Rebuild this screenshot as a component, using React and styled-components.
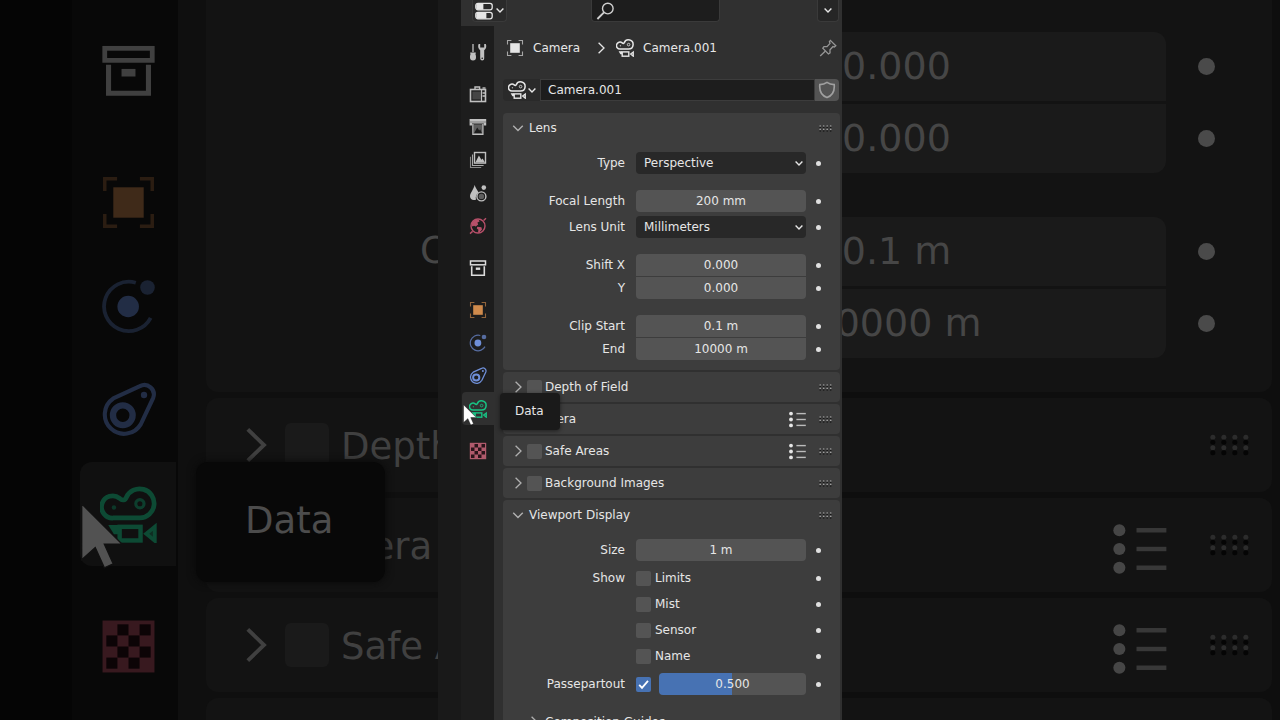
// App.jsx
import { useState } from "react";
import styled, { createGlobalStyle } from "styled-components";

const GlobalStyle = createGlobalStyle`
  * {
    box-sizing: border-box;
  }
  body {
    margin: 0;
    background: #050505;
    overflow: hidden;
  }
  body, button, input, select, output {
    font-family: "DejaVu Sans", "Noto Sans", sans-serif;
    font-size: 12px;
    line-height: 16px;
    color: #e6e6e6;
  }
  button, input, select {
    appearance: none;
    margin: 0;
    padding: 0;
    border: none;
    outline: none;
    background: none;
  }
  svg {
    display: block;
    flex: none;
  }
`;

const Page = styled.div`
  display: grid;
  grid-template-columns: minmax(0, 1fr) minmax(320px, 404px) minmax(0, 1fr);
  height: 100vh;
  overflow: hidden;
`;

/* ---------- icons ---------- */
const Svg = ({ size = 18, children, ...rest }) => (
  <svg
    width={size}
    height={size}
    viewBox="0 0 18 18"
    fill="none"
    stroke="currentColor"
    aria-hidden="true"
    {...rest}
  >
    {children}
  </svg>
);

const CameraIcon = ({ size }) => (
  <Svg size={size}>
    <path
      d="M4.2 10.1A3.5 3.5 0 1 1 6.2 3.9C7 4.7 8 4.5 8.3 3.6A4.6 4.6 0 1 1 12.6 10.1Z"
      strokeWidth="1.5"
    />
    <circle cx="12.6" cy="5.6" r="1.3" strokeWidth="1" opacity="0.8" />
    <circle cx="4.4" cy="6.8" r="0.7" fill="currentColor" stroke="none" opacity="0.7" />
    <rect x="6.2" y="12.9" width="6.6" height="4.3" strokeWidth="1.4" />
    <path d="M2.6 12.3H6V15.2H4.4Z" fill="currentColor" stroke="none" />
    <path d="M17.3 12.9V17.3L14.6 15.1Z" fill="currentColor" fillOpacity="0.5" strokeWidth="1.2" />
  </Svg>
);

const ArchiveIcon = ({ size }) => (
  <Svg size={size}>
    <rect x="1.5" y="2" width="15" height="3.8" strokeWidth="1.5" />
    <path d="M2.7 7.2V16.2H15.3V7.2" strokeWidth="1.6" />
    <rect x="6.8" y="8.5" width="4.4" height="2.4" fill="currentColor" stroke="none" />
  </Svg>
);

const ObjectIcon = ({ size }) => (
  <Svg size={size}>
    <path
      d="M1.5 5.4V1.5H5.4M12.6 1.5H16.5V5.4M16.5 12.6V16.5H12.6M5.4 16.5H1.5V12.6"
      strokeWidth="1.1"
      opacity="0.65"
    />
    <rect x="4.2" y="4.2" width="9.6" height="9.6" fill="currentColor" stroke="none" />
  </Svg>
);

const PhysicsIcon = ({ size }) => (
  <Svg size={size}>
    <path d="M11.3 1.5A7.8 7.8 0 1 0 16 12.6" strokeWidth="1.2" opacity="0.7" />
    <circle cx="8.9" cy="9" r="3.4" fill="currentColor" stroke="none" />
    <circle cx="15" cy="3" r="2.3" fill="currentColor" stroke="none" opacity="0.7" />
  </Svg>
);

const ConstraintIcon = ({ size }) => (
  <Svg size={size}>
    <path
      d="M4.2 5.2L12.6 1.3A3 3 0 0 1 16.8 5L12.9 13.3A6.1 6.1 0 1 1 4.2 5.2Z"
      strokeWidth="1.3"
    />
    <circle cx="7.2" cy="10.5" r="3.1" strokeWidth="2" />
    <circle cx="13.9" cy="4.1" r="1" fill="currentColor" stroke="none" />
  </Svg>
);

const TextureIcon = ({ size, hole }) => (
  <Svg size={size}>
    <rect x="0.8" y="0.8" width="16.4" height="16.4" fill="currentColor" stroke="none" />
    {[0, 1, 2, 3].map((row) =>
      [0, 1].map((col) => (
        <rect
          key={`${row}-${col}`}
          x={2 + (col * 2 + (row % 2 ? 0 : 1)) * 3.5}
          y={2 + row * 3.5}
          width="3.5"
          height="3.5"
          fill={hole || "#2a141a"}
          stroke="none"
        />
      ))
    )}
  </Svg>
);

const ToolIcon = () => (
  <Svg>
    <path d="M4 1V9" strokeWidth="1.3" />
    <path
      d="M1.2 9.6H6.8V10.8H6.2C6.9 12 7 13 7 14.4A3 3 0 0 1 1 14.4C1 13 1.1 12 1.8 10.8H1.2Z"
      fill="currentColor"
      stroke="none"
    />
    <path
      d="M9.6 1C8.6 3.5 9.3 6 11.2 7.3V15.4A2 2 0 0 0 15.2 15.4V7.3C17.2 6 17.8 3.5 16.8 1H15.2V4.6H11.2V1Z"
      fill="currentColor"
      stroke="none"
    />
    <circle cx="13.2" cy="15.2" r="0.8" fill="#1d1d1d" stroke="none" />
  </Svg>
);

const RenderIcon = () => (
  <Svg>
    <path d="M6 4.4V2H10.6V4.4" strokeWidth="1.4" />
    <path d="M13.5 3H16.5" strokeWidth="1.4" />
    <rect x="1.5" y="4.5" width="15" height="12" strokeWidth="1.6" />
    <rect x="3.4" y="6.6" width="8.4" height="7.8" fill="currentColor" stroke="none" opacity="0.25" />
    <path d="M12.5 4.6V16.4" strokeWidth="1.2" />
    <path d="M13.5 8H16M13.5 11H16" strokeWidth="1.6" />
  </Svg>
);

const OutputIcon = () => (
  <Svg>
    <path d="M0.6 1H17.2V7.6H14.8V5.4H3V7.6H0.6Z" fill="currentColor" stroke="none" />
    <path d="M1 4H17" stroke="#6d6d6d" strokeWidth="0.8" />
    <path d="M3.9 6V16.4H13.9V6" strokeWidth="1.3" />
    <rect x="4.6" y="6.4" width="8.8" height="9.6" fill="currentColor" stroke="none" opacity="0.4" />
    <path d="M5.2 15L8.2 9.6L10.2 12.4L11.2 11.2L12.8 15Z" fill="#1d1d1d" stroke="none" />
  </Svg>
);

const LayersIcon = () => (
  <Svg>
    <rect x="5.5" y="1.5" width="11" height="10.6" strokeWidth="1.4" />
    <path d="M6.4 11.6L9.9 4.6L12.4 8.8L13.6 7.4L16 11.6Z" fill="currentColor" stroke="none" />
    <path d="M3.5 3.6V14.5H14.6" strokeWidth="1.1" opacity="0.85" />
    <path d="M1.5 5.8V16.5H12.2" strokeWidth="1.1" opacity="0.65" />
  </Svg>
);

const SceneIcon = () => (
  <Svg>
    <path
      d="M5.6 1C4.6 5.6 1 9.2 1 12.2C1 14.6 2.7 16 4.8 16C6 16 6.6 15.8 7 15.4C6.2 12.6 7.4 9.6 9.6 8.4C8 5.6 6.6 4 5.6 1Z"
      fill="currentColor"
      stroke="none"
    />
    <circle cx="14.8" cy="3.6" r="2.3" fill="currentColor" stroke="none" />
    <circle cx="12.4" cy="12.4" r="4.5" strokeWidth="1.4" />
    <circle cx="12.4" cy="12.4" r="2.7" fill="currentColor" stroke="none" opacity="0.4" />
  </Svg>
);

const WorldIcon = () => (
  <Svg>
    <circle cx="9" cy="9" r="7" strokeWidth="1.4" />
    <path d="M1 16.6L3.6 14.4M14.6 3.4L17 1.2" strokeWidth="1.4" />
    <path
      d="M3 5.4C4.6 3.2 7.4 2.2 9.6 2.6L10.6 4.6L8.4 5.6L9.2 7.4L6.8 9.4L5 8.8L3.6 9.6L2.4 8.2Z"
      fill="currentColor"
      stroke="none"
    />
    <path d="M8.2 9.8L12.4 10.2L13 12.4L10.4 15.4L9 15.6L9.4 12.8L7.8 11.4Z" fill="currentColor" stroke="none" />
  </Svg>
);

const EditorIcon = () => (
  <Svg>
    <rect x="0.8" y="1.4" width="16.4" height="6.4" rx="2.2" strokeWidth="1.3" />
    <path d="M3 1.4H8.4V7.8H3C0.6 7.8 0.6 1.4 3 1.4Z" fill="currentColor" stroke="none" />
    <rect x="0.8" y="10.4" width="16.4" height="6.4" rx="2.2" strokeWidth="1.3" />
    <path d="M3 10.4H11.4V16.8H3C0.6 16.8 0.6 10.4 3 10.4Z" fill="currentColor" stroke="none" />
  </Svg>
);

const SearchIcon = () => (
  <Svg strokeWidth="1.4">
    <circle cx="11.8" cy="6.6" r="5.3" />
    <path d="M8 10.4L1.4 17" strokeWidth="1.9" />
  </Svg>
);

const PinIcon = () => (
  <Svg strokeWidth="1.3">
    <path d="M11.4 1.4L16.8 6.8L15.4 8L14 7.6L11 10.8L11 14L9.4 15L3.8 9.2L5 7.6L8 7.6L11 4.4L10.4 2.6Z" />
    <path d="M6.4 12L1.2 17" />
  </Svg>
);

const ShieldIcon = () => (
  <Svg strokeWidth="1.6">
    <path d="M9 1.4C11.4 3.2 13.8 3.6 16.2 3.6C16.8 9.6 14.8 14.4 9 16.6C3.2 14.4 1.2 9.6 1.8 3.6C4.2 3.6 6.6 3.2 9 1.4Z" />
  </Svg>
);

const Chevron = ({ width = 8, height = 5, weight = 1.4 }) => (
  <svg width={width} height={height} viewBox="0 0 8 5" fill="none" stroke="currentColor" strokeWidth={weight} aria-hidden="true">
    <path d="M0.6 0.6L4 4L7.4 0.6" />
  </svg>
);

const Arrow = ({ width = 7, height = 12 }) => (
  <svg width={width} height={height} viewBox="0 0 7 12" fill="none" stroke="currentColor" strokeWidth="1.3" aria-hidden="true">
    <path d="M0.6 0.8L6 6L0.6 11.2" />
  </svg>
);

const Grip = ({ width = 13, height = 7, light = "#a0a0a0", dark = "#151515" }) => (
  <svg width={width} height={height} viewBox="0 0 13 7" aria-hidden="true">
    {[0, 1, 2, 3].map((col) =>
      [0, 1].map((row) => (
        <g key={`${col}-${row}`}>
          <circle cx={1.2 + col * 3.5} cy={1 + row * 3.4} r="0.8" fill={light} />
          <circle cx={1.2 + col * 3.5} cy={2.6 + row * 3.4} r="0.8" fill={dark} />
        </g>
      ))
    )}
  </svg>
);

const PresetIcon = ({ width = 17, height = 17 }) => (
  <svg width={width} height={height} viewBox="0 0 17 17" fill="currentColor" aria-hidden="true">
    {[2.6, 8.5, 14.4].map((y) => (
      <g key={y}>
        <circle cx="2" cy={y} r="1.9" />
        <rect x="7.4" y={y - 0.7} width="9.4" height="1.4" opacity="0.75" />
      </g>
    ))}
  </svg>
);

const Pointer = ({ width, height, fill }) => (
  <svg width={width} height={height} viewBox="0 0 13 20" aria-hidden="true">
    <path d="M0.5 0.5V17L4.5 13.4L7.2 19.4L9.8 18.2L7.2 12.4H12.4Z" fill={fill} stroke="#111111" strokeWidth="0.4" />
  </svg>
);

/* ---------- editor ---------- */
const Editor = styled.main`
  display: grid;
  grid-template-columns: 33px minmax(0, 1fr);
  grid-template-rows: 26px minmax(0, 1fr);
  min-height: 0;
  padding-left: 23px;
  background: #191919;
`;

const Header = styled.header`
  grid-column: 1 / -1;
  display: grid;
  grid-template-columns: 1fr 129px 1fr;
  align-items: start;
  padding: 0 3px 0 11px;
  background: #303030;
`;

const MenuButton = styled.button`
  display: flex;
  align-items: center;
  justify-content: center;
  gap: 3px;
  width: ${({ $wide }) => ($wide ? "35px" : "22px")};
  height: 22px;
  border: 1px solid #3a3a3a;
  border-top: none;
  border-radius: 0 0 4px 4px;
  background: ${({ $wide }) => ($wide ? "#2a2a2a" : "#262626")};
  justify-self: ${({ $end }) => ($end ? "end" : "start")};
`;

const SearchBox = styled.label`
  display: flex;
  align-items: center;
  height: 22px;
  padding-left: 4px;
  border: 1px solid #3a3a3a;
  border-top: none;
  border-radius: 0 0 4px 4px;
  background: #1d1d1d;
  color: #d0d0d0;
  > input {
    flex: 1;
    min-width: 0;
  }
`;

const Rail = styled.nav`
  display: flex;
  flex-direction: column;
  gap: 9px;
  padding: 9px 0 0 1px;
  background: #1d1d1d;
`;

const TabGroup = styled.div`
  display: flex;
  flex-direction: column;
`;

const TabSlot = styled.div`
  position: relative;
`;

const Tab = styled.button`
  display: grid;
  place-items: center;
  width: 100%;
  height: 33px;
  border-radius: 4px 0 0 4px;
  color: ${({ $color }) => $color || "#c0c0c0"};
  background: ${({ $active }) => ($active ? "#303030" : "transparent")};
`;

const Tooltip = styled.div`
  position: absolute;
  z-index: 2;
  left: 38px;
  top: 1px;
  padding: 10px 16px 11px 15px;
  border-radius: 4px;
  background: #1a1a1a;
  box-shadow: 0 1px 4px rgba(0, 0, 0, 0.5);
`;

const MousePointer = styled.div`
  position: absolute;
  z-index: 3;
  left: 1px;
  top: 12px;
`;

const Content = styled.div`
  min-width: 0;
  padding: 0 2px 0 9px;
  background: #303030;
  overflow: hidden;
`;

const Path = styled.div`
  display: flex;
  align-items: center;
  height: 43px;
  padding: 0 3px;
  gap: 9px;
  .separator {
    margin: 0 2px 0 9px;
  }
  .pin {
    margin-left: auto;
    color: #969696;
  }
`;

const DataBlock = styled.div`
  display: flex;
  height: 22px;
  margin: 10px 1px 12px 0;
  border-radius: 4px;
  overflow: hidden;
  > button {
    display: flex;
    align-items: center;
    justify-content: center;
    gap: 2px;
  }
  .browse {
    width: 37px;
    background: #2a2a2a;
  }
  .name {
    flex: 1;
    min-width: 0;
    padding: 0 7px;
    border: 1px solid #3c3c3c;
    background: #1d1d1d;
  }
  .user {
    width: 24px;
    background: #545454;
    color: #a0a0a0;
  }
`;

const Panels = styled.div`
  display: flex;
  flex-direction: column;
  gap: 2px;
`;

const Panel = styled.section`
  border-radius: 4px;
  background: #3d3d3d;
  padding-bottom: ${({ $open }) => ($open ? "10px" : "0")};
`;

const PanelHeader = styled.div`
  display: flex;
  align-items: center;
  height: 30px;
  padding: 0 8px 0 9px;
  > .toggle {
    display: grid;
    place-items: center;
    width: 12px;
    height: 16px;
    color: #b0b0b0;
  }
  > .title {
    margin-left: ${({ $checkbox }) => ($checkbox ? "3px" : "5px")};
  }
  > .tools {
    display: flex;
    align-items: center;
    gap: 13px;
    margin-left: auto;
  }
  h2, h3, label {
    margin: 0;
    font-size: 12px;
    font-weight: 400;
    white-space: nowrap;
  }
`;

const SubPanelHeader = styled(PanelHeader)`
  margin-top: 8px;
  padding-left: 25px;
`;

const Body = styled.div`
  display: flex;
  flex-direction: column;
  gap: ${({ $gap }) => $gap};
  padding-top: 9px;
`;

const Group = styled.div`
  display: flex;
  flex-direction: column;
  gap: ${({ $gap }) => $gap || "0"};
`;

const Row = styled.div`
  display: grid;
  grid-template-columns: 122px minmax(0, 1fr) 34px;
  align-items: center;
  height: ${({ $tall }) => ($tall ? "26px" : "22px")};
  > .label {
    text-align: right;
    white-space: nowrap;
  }
  > .control {
    display: flex;
    align-items: center;
    min-width: 0;
    padding-left: 11px;
  }
`;

const KeyDot = styled.button`
  width: 5px;
  height: 5px;
  margin-left: 10px;
  border-radius: 50%;
  background: #e0e0e0;
`;

const radius = {
  top: "4px 4px 0 0",
  bottom: "0 0 4px 4px",
};

const NumberField = styled.input`
  width: 100%;
  height: 22px;
  border-radius: ${({ $join }) => radius[$join] || "4px"};
  background: #545454;
  text-align: center;
`;

const Dropdown = styled.div`
  display: grid;
  align-items: center;
  width: 100%;
  border-radius: 4px;
  background: #282828;
  > * {
    grid-area: 1 / 1;
  }
  > select {
    width: 100%;
    height: 22px;
    padding: 0 8px;
  }
  > svg {
    justify-self: end;
    margin-right: 3px;
    pointer-events: none;
  }
`;

const CheckWrap = styled.span`
  display: grid;
  place-items: center;
  width: 15px;
  height: 15px;
  margin-left: ${({ $header }) => ($header ? "3px" : "0")};
  > * {
    grid-area: 1 / 1;
  }
  > input {
    width: 15px;
    height: 15px;
    border-radius: 2px;
    background: #545454;
  }
  > input:checked {
    background: #4772b3;
  }
  > svg {
    pointer-events: none;
  }
`;

const CheckLabel = styled.label`
  margin-left: 4px;
`;

const Slider = styled.div`
  display: grid;
  flex: 1;
  min-width: 0;
  margin-left: 8px;
  > * {
    grid-area: 1 / 1;
  }
  > input {
    width: 100%;
    height: 22px;
    border-radius: 4px;
  }
  > input::-webkit-slider-thumb {
    appearance: none;
    width: 1px;
    height: 22px;
  }
  > output {
    place-self: center;
    pointer-events: none;
  }
`;

const Checkbox = ({ id, header, defaultChecked = false, ...rest }) => {
  const [checked, setChecked] = useState(defaultChecked);
  return (
    <CheckWrap $header={header}>
      <input
        type="checkbox"
        id={id}
        checked={checked}
        onChange={(e) => setChecked(e.target.checked)}
        {...rest}
      />
      {checked && (
        <svg width="13" height="13" viewBox="0 0 13 13" fill="none" stroke="#ffffff" strokeWidth="1.8" aria-hidden="true">
          <path d="M2.2 6.8L5 9.8L11 2.8" />
        </svg>
      )}
    </CheckWrap>
  );
};

const NumberRow = ({ id, label, value, join }) => (
  <Row>
    <label className="label" htmlFor={id}>{label}</label>
    <div className="control">
      <NumberField id={id} type="text" defaultValue={value} $join={join} />
    </div>
    <KeyDot aria-label={`Animate ${label}`} />
  </Row>
);

const SelectRow = ({ id, label, options }) => (
  <Row>
    <label className="label" htmlFor={id}>{label}</label>
    <div className="control">
      <Dropdown>
        <select id={id}>
          {options.map((option) => (
            <option key={option}>{option}</option>
          ))}
        </select>
        <Chevron />
      </Dropdown>
    </div>
    <KeyDot aria-label={`Animate ${label}`} />
  </Row>
);

const CheckRow = ({ id, label, title }) => (
  <Row $tall>
    <span className="label">{title}</span>
    <div className="control">
      <Checkbox id={id} />
      <CheckLabel htmlFor={id}>{label}</CheckLabel>
    </div>
    <KeyDot aria-label={`Animate ${label}`} />
  </Row>
);

const SliderRow = () => {
  const [value, setValue] = useState(0.5);
  const percent = value * 100;
  return (
    <Row>
      <label className="label" htmlFor="passepartout">Passepartout</label>
      <div className="control">
        <Checkbox id="passepartout" defaultChecked />
        <Slider>
          <input
            type="range"
            min="0"
            max="1"
            step="0.001"
            value={value}
            aria-label="Passepartout opacity"
            onChange={(e) => setValue(Number(e.target.value))}
            style={{ background: `linear-gradient(90deg, #4772b3 ${percent}%, #545454 ${percent}%)` }}
          />
          <output>{value.toFixed(3)}</output>
        </Slider>
      </div>
      <KeyDot aria-label="Animate Passepartout" />
    </Row>
  );
};

const CollapsedPanel = ({ id, title, checkbox, preset }) => (
  <Panel>
    <PanelHeader $checkbox={checkbox}>
      <button className="toggle" aria-label={`Expand ${title}`}><Arrow /></button>
      {checkbox && <Checkbox id={id} header />}
      <div className="title">
        {checkbox ? <label htmlFor={id}>{title}</label> : <h2>{title}</h2>}
      </div>
      <div className="tools">
        {preset && <button aria-label={`${title} presets`}><PresetIcon /></button>}
        <Grip />
      </div>
    </PanelHeader>
  </Panel>
);

const OpenPanel = ({ title, gap, children }) => (
  <Panel $open>
    <PanelHeader>
      <button className="toggle" aria-label={`Collapse ${title}`}>
        <Chevron width={12} height={7} weight={1} />
      </button>
      <div className="title"><h2>{title}</h2></div>
      <div className="tools"><Grip /></div>
    </PanelHeader>
    <Body $gap={gap}>{children}</Body>
  </Panel>
);

const tabGroups = [
  [{ name: "Tool", icon: ToolIcon }],
  [
    { name: "Render", icon: RenderIcon },
    { name: "Output", icon: OutputIcon },
    { name: "View Layer", icon: LayersIcon },
    { name: "Scene", icon: SceneIcon },
    { name: "World", icon: WorldIcon, color: "#b8506a" },
  ],
  [{ name: "Collection", icon: ArchiveIcon, color: "#dcdcdc" }],
  [
    { name: "Object", icon: ObjectIcon, color: "#d08b4c" },
    { name: "Physics", icon: PhysicsIcon, color: "#6f8fd8" },
    { name: "Constraints", icon: ConstraintIcon, color: "#6f8fd8" },
    { name: "Data", icon: CameraIcon, color: "#18c283", active: true },
  ],
  [{ name: "Texture", icon: TextureIcon, color: "#b05a6c" }],
];

const PropertiesEditor = () => (
  <Editor>
    <Header>
      <MenuButton $wide aria-label="Editor type">
        <EditorIcon />
        <Chevron />
      </MenuButton>
      <SearchBox>
        <SearchIcon />
        <input type="search" aria-label="Search" />
      </SearchBox>
      <MenuButton $end aria-label="Options">
        <Chevron />
      </MenuButton>
    </Header>

    <Rail>
      {tabGroups.map((group, index) => (
        <TabGroup key={index}>
          {group.map(({ name, icon: Icon, color, active }) => (
            <TabSlot key={name}>
              <Tab aria-label={name} $color={color} $active={active}>
                <Icon />
              </Tab>
              {active && (
                <>
                  <Tooltip role="tooltip">{name}</Tooltip>
                  <MousePointer>
                    <Pointer width={14} height={22} fill="#ffffff" />
                  </MousePointer>
                </>
              )}
            </TabSlot>
          ))}
        </TabGroup>
      ))}
    </Rail>

    <Content>
      <Path>
        <ObjectIcon />
        <span>Camera</span>
        <span className="separator"><Arrow /></span>
        <CameraIcon />
        <span>Camera.001</span>
        <button className="pin" aria-label="Pin"><PinIcon /></button>
      </Path>

      <DataBlock>
        <button className="browse" aria-label="Browse camera data">
          <CameraIcon />
          <Chevron />
        </button>
        <input className="name" type="text" defaultValue="Camera.001" aria-label="Name" />
        <button className="user" aria-label="Fake user"><ShieldIcon /></button>
      </DataBlock>

      <Panels>
        <OpenPanel title="Lens" gap="16px">
          <SelectRow id="type" label="Type" options={["Perspective", "Orthographic", "Panoramic"]} />
          <Group $gap="4px">
            <NumberRow id="focal" label="Focal Length" value="200 mm" />
            <SelectRow id="unit" label="Lens Unit" options={["Millimeters", "Field of View"]} />
          </Group>
          <Group $gap="1px">
            <NumberRow id="shift-x" label="Shift X" value="0.000" join="top" />
            <NumberRow id="shift-y" label="Y" value="0.000" join="bottom" />
          </Group>
          <Group $gap="1px">
            <NumberRow id="clip-start" label="Clip Start" value="0.1 m" join="top" />
            <NumberRow id="clip-end" label="End" value="10000 m" join="bottom" />
          </Group>
        </OpenPanel>

        <CollapsedPanel id="dof" title="Depth of Field" checkbox />
        <CollapsedPanel title="Camera" preset />
        <CollapsedPanel id="safe" title="Safe Areas" checkbox preset />
        <CollapsedPanel id="bg" title="Background Images" checkbox />

        <OpenPanel title="Viewport Display" gap="4px">
          <NumberRow id="size" label="Size" value="1 m" />
          <Group>
            <CheckRow id="limits" label="Limits" title="Show" />
            <CheckRow id="mist" label="Mist" />
            <CheckRow id="sensor" label="Sensor" />
            <CheckRow id="name" label="Name" />
          </Group>
          <SliderRow />
          <SubPanelHeader>
            <button className="toggle" aria-label="Expand Composition Guides"><Arrow /></button>
            <div className="title"><h3>Composition Guides</h3></div>
          </SubPanelHeader>
        </OpenPanel>
      </Panels>
    </Content>
  </Editor>
);

/* ---------- dimmed enlarged sides ---------- */
const Side = styled.div`
  display: flex;
  justify-content: ${({ $end }) => ($end ? "flex-end" : "flex-start")};
  min-width: 0;
  overflow: hidden;
  background: ${({ $end }) => ($end ? "#0e0e0e" : "#050505")};
  color: #464646;
  font-size: 37px;
  line-height: 44px;
  white-space: nowrap;
`;

const BigRail = styled.div`
  display: flex;
  flex: none;
  flex-direction: column;
  gap: 28px;
  width: 106px;
  margin-left: 72px;
  padding: 18px 2px 0 8px;
  background: #080808;
`;

const BigTab = styled.div`
  position: relative;
  display: grid;
  place-items: center;
  height: 104px;
  border-radius: 12px 0 0 12px;
  color: ${({ $color }) => $color};
  background: ${({ $active }) => ($active ? "#101010" : "transparent")};
`;

const BigTooltip = styled.div`
  position: absolute;
  z-index: 1;
  left: 116px;
  top: 0;
  padding: 37px 52px 39px 49px;
  border-radius: 12px;
  background: #080808;
  box-shadow: 0 0 8px #080808;
  color: #4c4c4c;
`;

const BigPointer = styled.div`
  position: absolute;
  z-index: 2;
  left: 0;
  top: 40px;
`;

const BigPanels = styled.div`
  display: flex;
  flex: 1 0 auto;
  flex-direction: column;
  gap: 6px;
  padding-left: 28px;
  background: #0f0f0f;
`;

const BigPanel = styled.div`
  display: flex;
  flex: none;
  align-items: center;
  height: 94px;
  padding-left: 40px;
  border-radius: 12px;
  background: #131313;
  color: #404040;
  > .checkbox {
    width: 44px;
    height: 44px;
    margin: 0 12px 0 18px;
    border-radius: 6px;
    background: #1a1a1a;
  }
  > .title {
    padding-top: 4px;
    margin-left: ${({ $plain }) => ($plain ? "20px" : "0")};
  }
`;

const BigLens = styled.div`
  flex: none;
  height: 392px;
  padding: 229px 0 0 214px;
  border-radius: 0 0 12px 12px;
  background: #131313;
`;

const BigFields = styled.div`
  display: flex;
  flex: none;
  flex-direction: column;
  gap: 6px;
  width: 645px;
  margin-right: 8px;
`;

const BigFieldPanel = styled.div`
  display: flex;
  flex: none;
  flex-direction: column;
  gap: 44px;
  height: 392px;
  padding-top: 32px;
  border-radius: 0 0 12px 0;
  background: #131313;
`;

const BigPair = styled.div`
  display: flex;
  flex-direction: column;
  gap: 3px;
`;

const BigRow = styled.div`
  display: flex;
  align-items: center;
  gap: 32px;
  height: 69px;
  > .value {
    flex: none;
    width: 539px;
    padding: 12px 0 13px;
    border-radius: ${({ $bottom }) => ($bottom ? "0 0 12px 12px" : "12px 12px 0 0")};
    background: #1a1a1a;
    font-size: 38px;
    text-align: center;
  }
  > .dot {
    width: 17px;
    height: 17px;
    border-radius: 50%;
    background: #4a4a4a;
  }
`;

const BigHeader = styled.div`
  display: flex;
  flex: none;
  align-items: center;
  justify-content: flex-end;
  gap: 42px;
  height: 94px;
  padding-right: 22px;
  border-radius: 0 12px 12px 0;
  background: #131313;
  > .preset {
    padding-top: 8px;
  }
`;

const LeftSide = () => (
  <Side aria-hidden="true">
    <BigRail>
      <BigTab $color="#404040"><ArchiveIcon size={57} /></BigTab>
      <div>
        <BigTab $color="#3f2a19"><ObjectIcon size={57} /></BigTab>
        <BigTab $color="#222d45"><PhysicsIcon size={57} /></BigTab>
        <BigTab $color="#222d45"><ConstraintIcon size={57} /></BigTab>
        <BigTab $color="#0d4a34" $active>
          <CameraIcon size={57} />
          <BigTooltip>Data</BigTooltip>
          <BigPointer><Pointer width={44} height={68} fill="#525252" /></BigPointer>
        </BigTab>
      </div>
      <BigTab $color="#38191f"><TextureIcon size={57} hole="#0c0406" /></BigTab>
    </BigRail>
    <BigPanels>
      <BigLens>Clip Start</BigLens>
      <BigPanel>
        <Arrow width={21} height={36} />
        <span className="checkbox" />
        <span className="title">Depth of Field</span>
      </BigPanel>
      <BigPanel $plain>
        <Arrow width={21} height={36} />
        <span className="title">Camera</span>
      </BigPanel>
      <BigPanel>
        <Arrow width={21} height={36} />
        <span className="checkbox" />
        <span className="title">Safe Areas</span>
      </BigPanel>
      <BigPanel />
    </BigPanels>
  </Side>
);

const BigGrip = () => <Grip width={41} height={22} light="#2c2c2c" dark="#050505" />;

const BigPresetHeader = () => (
  <BigHeader>
    <span className="preset"><PresetIcon width={54} height={54} /></span>
    <BigGrip />
  </BigHeader>
);

const RightSide = () => (
  <Side $end aria-hidden="true">
    <BigFields>
      <BigFieldPanel>
        <BigPair>
          <BigRow><span className="value">0.000</span><span className="dot" /></BigRow>
          <BigRow $bottom><span className="value">0.000</span><span className="dot" /></BigRow>
        </BigPair>
        <BigPair>
          <BigRow><span className="value">0.1 m</span><span className="dot" /></BigRow>
          <BigRow $bottom><span className="value">10000 m</span><span className="dot" /></BigRow>
        </BigPair>
      </BigFieldPanel>
      <BigHeader><BigGrip /></BigHeader>
      <BigPresetHeader />
      <BigPresetHeader />
      <BigHeader />
    </BigFields>
  </Side>
);

const App = () => (
  <>
    <GlobalStyle />
    <Page>
      <LeftSide />
      <PropertiesEditor />
      <RightSide />
    </Page>
  </>
);

export default App;
